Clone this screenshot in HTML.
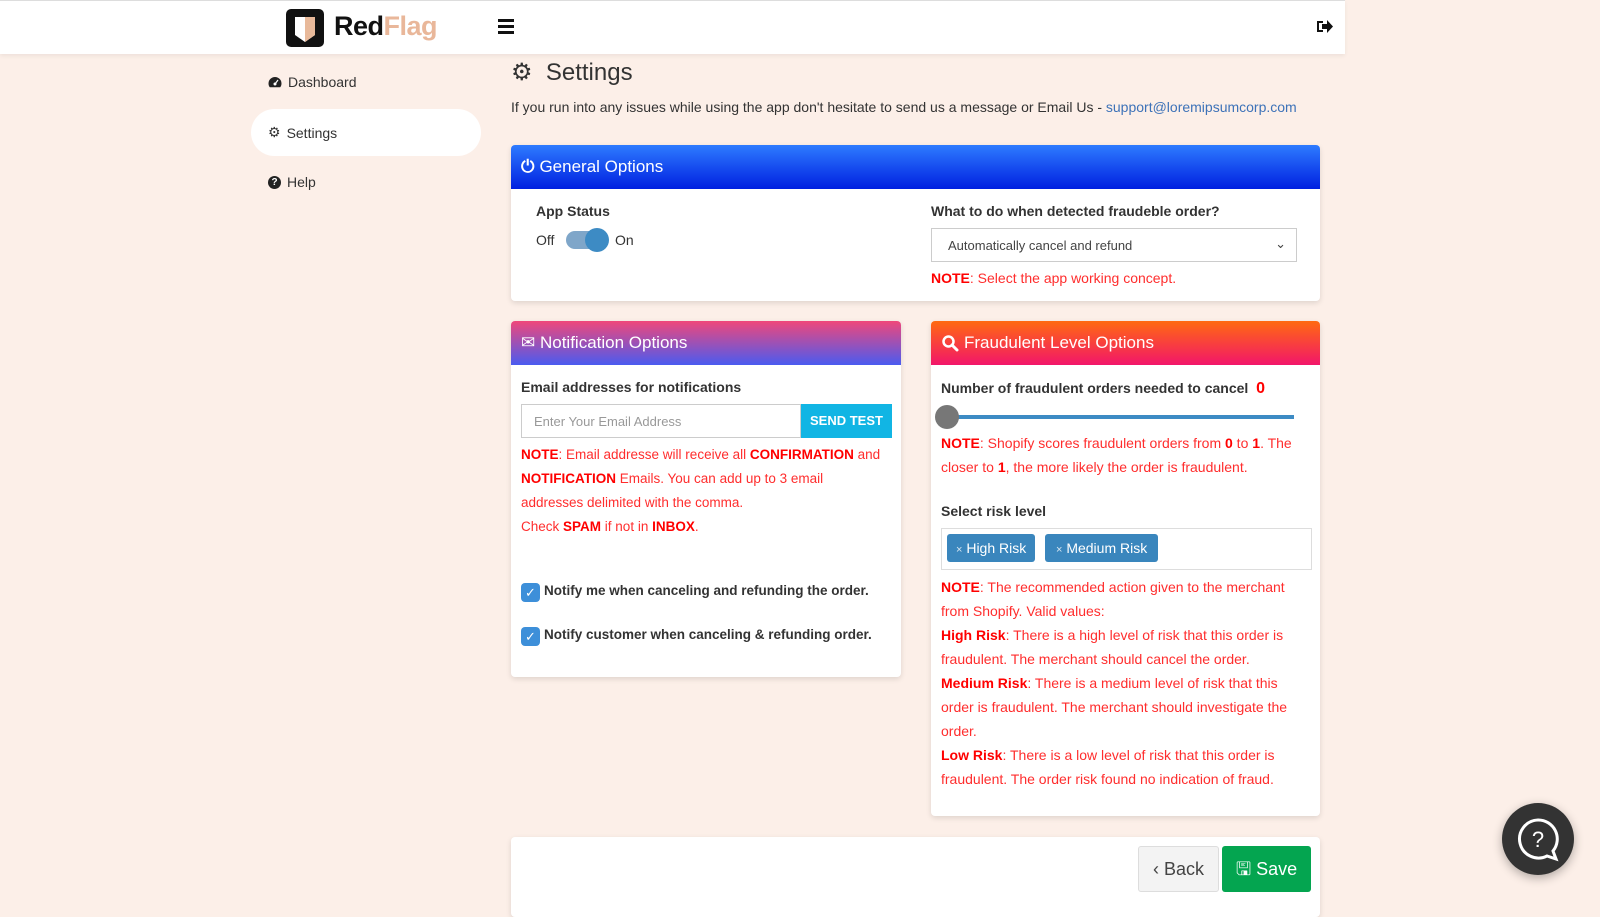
<!DOCTYPE html>
<html><head><meta charset="utf-8"><style>
*{box-sizing:border-box;margin:0;padding:0}
body{width:1600px;height:900px;overflow:hidden;background:#fcefe8;font-family:"Liberation Sans",sans-serif;color:#333;font-size:14px;position:relative}
.abs{position:absolute}
.hdr{left:0;top:0;width:1345px;height:54px;background:#fff;border-top:1px solid #ddd;box-shadow:0 2px 4px rgba(0,0,0,.06)}
.card{background:#fff;border-radius:4px;box-shadow:0 2px 6px rgba(0,0,0,.12);overflow:hidden}
.ch{height:44px;color:#fff;font-size:17px;display:flex;align-items:center;padding-left:10px;gap:5px}
.red{color:#ff2d2d}
.red b{color:#f00}
.note{font-size:14px;line-height:24px}
.lbl{font-weight:bold;font-size:14px;color:#333}
.nav{left:268px;font-size:14px;display:flex;align-items:center;gap:6px}
</style></head><body>
<div class="abs hdr">
  <div class="abs" style="left:286px;top:8px;width:38px;height:38px;background:#111;border-radius:5px">
    <svg width="38" height="38" viewBox="0 0 38 38"><path d="M9 8h20v18l-10 7-10-7z" fill="#fff"/><path d="M19 8h10v18l-10 7z" fill="#e8b99a"/></svg>
  </div>
  <div class="abs" style="left:334px;top:10px;font-size:27px;font-weight:bold;letter-spacing:-0.5px"><span style="color:#111">Red</span><span style="color:#e9b79a">Flag</span></div>
  <div class="abs" style="left:498px;top:18px;width:16px">
    <div style="height:3px;background:#111;margin-bottom:3px"></div><div style="height:3px;background:#111;margin-bottom:3px"></div><div style="height:3px;background:#111"></div>
  </div>
  <svg class="abs" style="left:1316px;top:17px" width="18" height="17" viewBox="0 0 18 17"><path d="M1 3h6v2H3v7h4v2H1z" fill="#111"/><path d="M6 6h5V2l6 6.5-6 6.5v-4H6z" fill="#111"/></svg>
</div>
<div class="abs" style="left:251px;top:109px;width:230px;height:47px;background:#fff;border-radius:24px"></div>
<div class="abs nav" style="top:74px"><svg width="14" height="12" viewBox="0 0 14 12"><path d="M7 1a6.5 6.5 0 0 0-6.5 6.5c0 1.5.5 2.8 1.3 3.8h10.4c.8-1 1.3-2.3 1.3-3.8A6.5 6.5 0 0 0 7 1z" fill="#222"/><circle cx="7" cy="8" r="1.5" fill="#fff"/><path d="M7 8l3-4" stroke="#fff" stroke-width="1.2"/></svg> <span>Dashboard</span></div>
<div class="abs nav" style="top:124px">⚙ <span>Settings</span></div>
<div class="abs nav" style="top:174px"><span style="display:inline-block;width:13px;height:13px;border-radius:50%;background:#222;color:#fff;font-size:10px;text-align:center;line-height:13px;font-weight:bold">?</span> <span>Help</span></div>

<div class="abs" style="left:511px;top:58px;font-size:24px;color:#333"><span style="font-size:24px">⚙</span>&nbsp; Settings</div>
<div class="abs" style="left:511px;top:99px;font-size:14px;color:#333">If you run into any issues while using the app don't hesitate to send us a message or Email Us - <span style="color:#3d72b8">support@loremipsumcorp.com</span></div>

<div class="abs card" style="left:511px;top:145px;width:809px;height:156px">
  <div class="ch" style="background:linear-gradient(#2e7bff,#0020e0)"><span style="font-weight:bold">⏻</span> General Options</div>
  <div class="abs lbl" style="left:25px;top:58px">App Status</div>
  <div class="abs" style="left:25px;top:87px;font-size:14px">Off</div>
  <div class="abs" style="left:55px;top:86px;width:42px;height:18px;border-radius:9px;background:#7fa6c9"></div>
  <div class="abs" style="left:74px;top:83px;width:24px;height:24px;border-radius:50%;background:#3d8bc4"></div>
  <div class="abs" style="left:104px;top:87px;font-size:14px">On</div>
  <div class="abs lbl" style="left:420px;top:58px">What to do when detected fraudeble order?</div>
  <div class="abs" style="left:420px;top:83px;width:366px;height:34px;border:1px solid #ccc;font-size:13px;padding:9px 16px;color:#444">Automatically cancel and refund<span style="position:absolute;right:10px;top:7px">⌄</span></div>
  <div class="abs red" style="left:420px;top:125px;font-size:14px"><b>NOTE</b>: Select the app working concept.</div>
</div>

<div class="abs card" style="left:511px;top:321px;width:390px;height:356px">
  <div class="ch" style="background:linear-gradient(#f0477a,#4a5bf0)">✉ Notification Options</div>
  <div class="abs lbl" style="left:10px;top:58px">Email addresses for notifications</div>
  <div class="abs" style="left:10px;top:83px;width:280px;height:34px;border:1px solid #ccc;font-size:13px;color:#999;padding:9px 12px">Enter Your Email Address</div>
  <div class="abs" style="left:290px;top:83px;width:91px;height:34px;background:#11b5e4;color:#fff;font-weight:bold;font-size:13px;text-align:center;line-height:34px">SEND TEST</div>
  <div class="abs note red" style="left:10px;top:122px;white-space:nowrap;font-size:13.5px"><b>NOTE</b>: Email addresse will receive all <b>CONFIRMATION</b> and<br><b>NOTIFICATION</b> Emails. You can add up to 3 email<br>addresses delimited with the comma.<br>Check <b>SPAM</b> if not in <b>INBOX</b>.</div>
  <div class="abs" style="left:10px;top:262px;width:19px;height:19px;border-radius:4px;background:#3d8fd9;color:#fff;font-size:13px;text-align:center;line-height:19px">✓</div>
  <div class="abs lbl" style="left:33px;top:262px;font-size:13.5px">Notify me when canceling and refunding the order.</div>
  <div class="abs" style="left:10px;top:306px;width:19px;height:19px;border-radius:4px;background:#3d8fd9;color:#fff;font-size:13px;text-align:center;line-height:19px">✓</div>
  <div class="abs lbl" style="left:33px;top:306px;font-size:13.5px">Notify customer when canceling &amp; refunding order.</div>
</div>

<div class="abs card" style="left:931px;top:321px;width:389px;height:495px">
  <div class="ch" style="background:linear-gradient(#ff6a10,#f2166a)"><svg width="18" height="18" viewBox="0 0 18 18"><circle cx="7.5" cy="7.5" r="5" fill="none" stroke="#fff" stroke-width="2.5"/><path d="M11 11l5 5" stroke="#fff" stroke-width="3" stroke-linecap="round"/></svg> Fraudulent Level Options</div>
  <div class="abs lbl" style="left:10px;top:59px">Number of fraudulent orders needed to cancel <span style="color:#f00;font-size:16px;margin-left:4px">0</span></div>
  <div class="abs" style="left:20px;top:94px;width:343px;height:4px;background:#3d8bc4"></div>
  <div class="abs" style="left:4px;top:84px;width:24px;height:24px;border-radius:50%;background:#777"></div>
  <div class="abs note red" style="left:10px;top:110px;width:370px"><b>NOTE</b>: Shopify scores fraudulent orders from <b>0</b> to <b>1</b>. The closer to <b>1</b>, the more likely the order is fraudulent.</div>
  <div class="abs lbl" style="left:10px;top:182px">Select risk level</div>
  <div class="abs" style="left:10px;top:207px;width:371px;height:42px;border:1px solid #ddd"></div>
  <div class="abs" style="left:16px;top:213px;height:28px;padding:0 9px;background:#3a86bd;color:#fff;border-radius:3px;font-size:14px;line-height:28px"><span style="font-size:11px;opacity:.8">×</span> High Risk</div>
  <div class="abs" style="left:114px;top:213px;height:28px;padding:0 11px;background:#3a86bd;color:#fff;border-radius:3px;font-size:14px;line-height:28px"><span style="font-size:11px;opacity:.8">×</span> Medium Risk</div>
  <div class="abs note red" style="left:10px;top:254px;width:370px"><b>NOTE</b>: The recommended action given to the merchant from Shopify. Valid values:<br><b>High Risk</b>: There is a high level of risk that this order is fraudulent. The merchant should cancel the order.<br><b>Medium Risk</b>: There is a medium level of risk that this order is fraudulent. The merchant should investigate the order.<br><b>Low Risk</b>: There is a low level of risk that this order is fraudulent. The order risk found no indication of fraud.</div>
</div>

<div class="abs card" style="left:511px;top:837px;width:809px;height:80px">
  <div class="abs" style="left:627px;top:9px;width:81px;height:46px;background:#f3f3f3;border:1px solid #ddd;border-radius:3px;font-size:18px;line-height:44px;text-align:center;color:#444">‹ Back</div>
  <div class="abs" style="left:711px;top:9px;width:89px;height:46px;background:#04a550;border-radius:3px;font-size:18px;line-height:46px;text-align:center;color:#fff">🖫 Save</div>
</div>

<div class="abs" style="left:1502px;top:803px;width:72px;height:72px;border-radius:50%;background:#333;box-shadow:0 3px 10px rgba(0,0,0,.3)">
  <svg width="72" height="72" viewBox="0 0 72 72"><path d="M36 17a19 19 0 1 0 9 36l9 3-3-8a19 19 0 0 0-15-31z" fill="none" stroke="#fff" stroke-width="3"/><text x="36" y="44" text-anchor="middle" fill="#fff" font-size="22" font-family="Liberation Sans">?</text></svg>
</div>
</body></html>
